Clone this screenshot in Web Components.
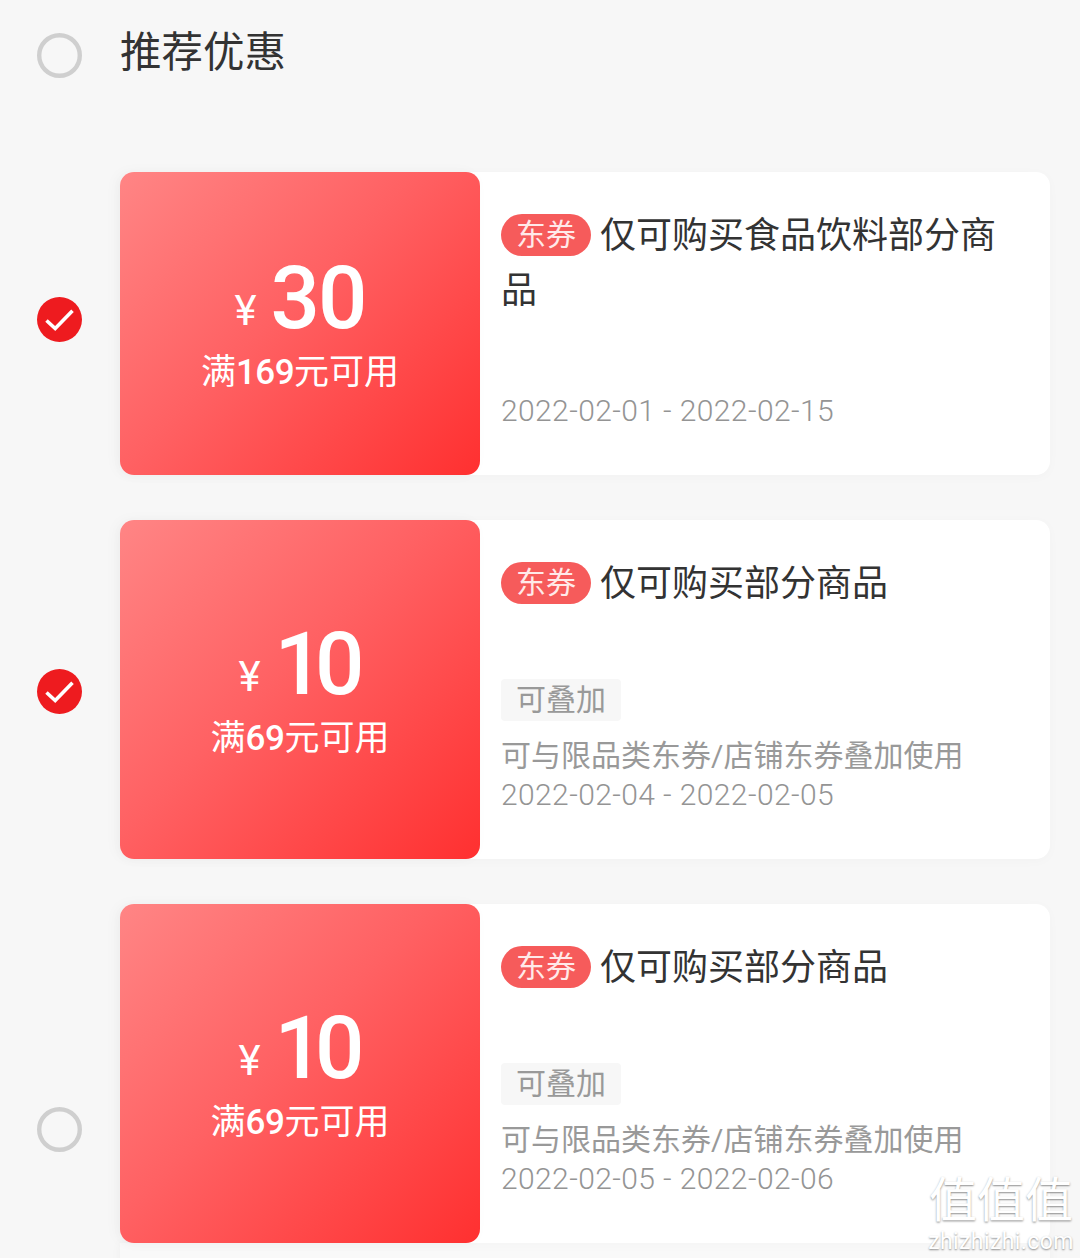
<!DOCTYPE html>
<html lang="zh">
<head>
<meta charset="utf-8">
<title>推荐优惠</title>
<style>
  html, body {
    margin: 0;
    height: 1258px;
    overflow: hidden;
    background: #f7f7f7;
    font-family: Roboto, "Noto Sans CJK SC", sans-serif;
  }
</style>
</head>
<body>
<coupon-page>
  <coupon-row radio-top="124.5px" checked>
    <coupon-card height="303px" amount="30" min="169">
      <span slot="title">仅可购买食品饮料部分商品</span>
      <span slot="date">2022-02-01 - 2022-02-15</span>
    </coupon-card>
  </coupon-row>
  <coupon-row radio-top="148.5px" checked>
    <coupon-card height="339px" amount="10" min="69" tight>
      <span slot="title">仅可购买部分商品</span>
      <span slot="pill">可叠加</span>
      <span slot="desc">可与限品类东券/店铺东券叠加使用</span>
      <span slot="date">2022-02-04 - 2022-02-05</span>
    </coupon-card>
  </coupon-row>
  <coupon-row radio-top="202.5px" tail>
    <coupon-card height="339px" amount="10" min="69" tight>
      <span slot="title">仅可购买部分商品</span>
      <span slot="pill">可叠加</span>
      <span slot="desc">可与限品类东券/店铺东券叠加使用</span>
      <span slot="date">2022-02-05 - 2022-02-06</span>
    </coupon-card>
  </coupon-row>
</coupon-page>
<water-mark></water-mark>

<script>
// little round tick on the left of every row
class RadioMark extends HTMLElement {
  constructor() {
    super()
    const shadow = this.attachShadow({ mode: "open" })
    const on = this.hasAttribute("checked")
    shadow.innerHTML = `
      <style>
        :host { display: block; width: 45px; height: 45px; flex: none; }
        svg { display: block; }
      </style>
      <svg width="45" height="45" viewBox="0 0 45 45">
        ${on
          ? `<circle cx="22.5" cy="22.5" r="22.5" fill="#ee1b1f"/>
             <path d="M9.5 23.5 L18.2 31.5 L35.5 13.8" fill="none" stroke="#fff" stroke-width="3.6"/>`
          : `<circle cx="22.5" cy="22.5" r="20.3" fill="none" stroke="#cfcfcf" stroke-width="4.4"/>`}
      </svg>
    `
  }
}

const couponPageTemplate = document.createElement("template")
couponPageTemplate.innerHTML = `
  <style>
    :host { display: block; width: 1080px; }
    header {
      display: flex;
      align-items: center;
      gap: 38px;
      height: 110px;
      padding: 0 0 62px 37px;
    }
    h1 {
      margin: 0 0 4px;
      font-size: 41.5px;
      line-height: 50px;
      font-weight: 400;
      color: #333;
    }
    .rows { display: flex; flex-direction: column; gap: 45px; }
  </style>
  <header>
    <radio-mark></radio-mark>
    <h1>推荐优惠</h1>
  </header>
  <div class="rows"><slot></slot></div>
`

class CouponPage extends HTMLElement {
  constructor() {
    super()
    const shadow = this.attachShadow({ mode: "open" })
    shadow.append(couponPageTemplate.content.cloneNode(true))
  }
}

class CouponRow extends HTMLElement {
  constructor() {
    super()
    const shadow = this.attachShadow({ mode: "open" })
    const checked = this.hasAttribute("checked") ? "checked" : ""
    const tail = this.hasAttribute("tail") ? `<div class="tail"></div>` : ""
    shadow.innerHTML = `
      <style>
        :host {
          display: flex;
          align-items: flex-start;
          gap: 38px;
          padding-left: 37px;
          width: 1013px;
        }
        radio-mark { margin-top: ${this.getAttribute("radio-top")}; }
        .main { width: 930px; }
        .tail {
          height: 40px;
          background: #f9f9f9;
          box-shadow: 0 0 10px rgba(0, 0, 0, .04);
        }
      </style>
      <radio-mark ${checked}></radio-mark>
      <div class="main"><slot></slot>${tail}</div>
    `
  }
}

const couponCardTemplate = document.createElement("template")
couponCardTemplate.innerHTML = `
  <style>
    :host {
      display: flex;
      position: relative;
      background: #fff;
      border-radius: 14px;
      box-shadow: 0 2px 12px rgba(0, 0, 0, .025);
    }
    .value {
      width: 360px;
      flex: none;
      box-sizing: border-box;
      display: flex;
      flex-direction: column;
      align-items: center;
      justify-content: center;
      color: #fff;
      border-radius: 14px;
      background: linear-gradient(135deg, #ff8585 0%, #ff6163 45%, #ff3030 100%);
      box-shadow: -4px 0 14px rgba(0, 0, 0, .03);
    }
    .price {
      display: flex;
      align-items: baseline;
      height: 92px;
      line-height: 92px;
    }
    .yen { font-size: 42px; font-weight: 400; margin-right: 14px; position: relative; top: -3px; }
    .amount { font-size: 87px; font-weight: 500; letter-spacing: -2px; }
    .amount.tight { letter-spacing: -9px; margin-right: 6px; }
    .min { font-size: 35px; line-height: 44px; margin-top: 7px; }
    .min b { font-weight: 500; letter-spacing: -.5px; }
    .info {
      flex: 1;
      padding: 37px 44px 45px 21px;
      display: flex;
      flex-direction: column;
      justify-content: space-between;
    }
    .title { font-size: 36px; line-height: 55px; color: #333; }
    .tag {
      display: inline-block;
      vertical-align: 3px;
      width: 90px;
      height: 42px;
      line-height: 42px;
      margin-right: 9px;
      text-align: center;
      font-size: 30px;
      color: #ffe9e9;
      background: #f65b5b;
      border-radius: 21px;
    }
    .pill {
      display: inline-block;
      height: 42px;
      line-height: 42px;
      padding: 0 15px;
      margin-bottom: 15px;
      font-size: 30px;
      color: #999;
      background: #f7f7f7;
      border-radius: 4px;
    }
    .pill.empty, .desc.empty { display: none; }
    .desc { display: block; font-size: 30px; line-height: 39px; color: #999; }
    .date { font-size: 30px; line-height: 39px; color: #949494; font-weight: 300; letter-spacing: .4px; }
  </style>
  <div class="value">
    <div class="price"><span class="yen">¥</span><span class="amount"></span></div>
    <div class="min">满<b></b>元可用</div>
  </div>
  <div class="info">
    <div class="title"><span class="tag">东券</span><slot name="title"></slot></div>
    <div class="foot">
      <span class="pill"><slot name="pill"></slot></span>
      <span class="desc"><slot name="desc"></slot></span>
      <div class="date"><slot name="date"></slot></div>
    </div>
  </div>
`

class CouponCard extends HTMLElement {
  constructor() {
    super()
    const shadow = this.attachShadow({ mode: "open" })
    shadow.append(couponCardTemplate.content.cloneNode(true))
    this.style.height = this.getAttribute("height")
    const amount = shadow.querySelector(".amount")
    amount.textContent = this.getAttribute("amount")
    // a "1" is narrow in the coupon font, pull the pair together
    if (this.hasAttribute("tight")) amount.classList.add("tight")
    shadow.querySelector(".min b").textContent = this.getAttribute("min")
    // the first coupon has no stacking note, drop the empty boxes
    if (!this.querySelector('[slot="pill"]')) {
      shadow.querySelector(".pill").classList.add("empty")
      shadow.querySelector(".desc").classList.add("empty")
    }
  }
}

class WaterMark extends HTMLElement {
  constructor() {
    super()
    const shadow = this.attachShadow({ mode: "open" })
    shadow.innerHTML = `
      <style>
        :host {
          position: absolute;
          left: 928px;
          top: 1172px;
          width: 146px;
          color: #fff;
          text-align: center;
          text-shadow: 0 1px 2px rgba(0, 0, 0, .45);
        }
        .big { font-size: 48px; line-height: 58px; white-space: nowrap; }
        .url { font-size: 23px; line-height: 22px; margin-top: 1px; letter-spacing: .4px; white-space: nowrap; }
      </style>
      <div class="big">值值值</div>
      <div class="url">zhizhizhi.com</div>
    `
  }
}

customElements.define("radio-mark", RadioMark)
customElements.define("coupon-page", CouponPage)
customElements.define("coupon-row", CouponRow)
customElements.define("coupon-card", CouponCard)
customElements.define("water-mark", WaterMark)
</script>
</body>
</html>
